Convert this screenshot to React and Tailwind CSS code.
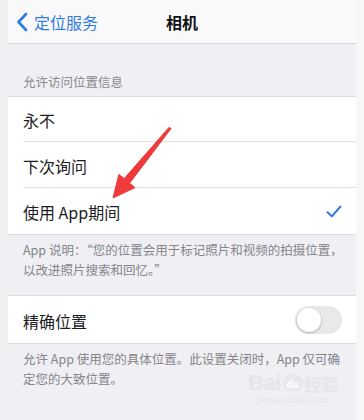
import React, { useState } from "react";

const font = { fontFamily: '"Noto Sans CJK SC", "Noto Sans", sans-serif' };

const Row = ({ children, last, right, h = "h-[46px]" }) => (
  <div className="pl-[15px]">
    <div
      className={`${h} flex items-center justify-between pr-[14px] ${
        last ? "" : "border-b border-[#e1e1e5]"
      }`}
    >
      <span className="text-[16px] text-[#1c1c1e] leading-none pt-[2px]">{children}</span>
      {right}
    </div>
  </div>
);

const Check = () => (
  <svg width="16" height="13" viewBox="0 0 16 13" fill="none">
    <path
      d="M1.5 7.2 L5.8 11.3 L14.5 1.5"
      stroke="#2f7be4"
      strokeWidth="2"
      strokeLinecap="round"
      strokeLinejoin="round"
    />
  </svg>
);

const Toggle = ({ on, onClick }) => (
  <button
    onClick={onClick}
    className={`relative w-[47px] h-[28px] rounded-full transition-colors ${
      on ? "bg-[#34c759]" : "bg-[#e9e9eb]"
    }`}
  >
    <span
      className={`absolute top-[2px] w-[24px] h-[24px] rounded-full bg-white shadow-[0_1px_3px_rgba(0,0,0,0.25)] transition-all ${
        on ? "left-[21px]" : "left-[2px]"
      }`}
    />
  </button>
);

export default function App() {
  const [precise, setPrecise] = useState(false);

  return (
    <div className="w-[364px] h-[420px] overflow-hidden flex bg-[#f3f3f5]" style={font}>
      <div className="w-[8px] bg-[#efeff1]" />
      <div className="relative w-[348px] bg-[#efeff4] flex flex-col">
        {/* Nav bar */}
        <div className="h-[44px] shrink-0 bg-[#f9f9f9] border-b border-[#d3d3d7] grid grid-cols-[1fr_auto_1fr] items-center">
          <div className="flex items-center gap-[6px] pl-[8px]">
            <svg width="12" height="20" viewBox="0 0 12 20" fill="none">
              <path
                d="M10 2 L2.5 10 L10 18"
                stroke="#2f7be4"
                strokeWidth="2.6"
                strokeLinecap="round"
                strokeLinejoin="round"
              />
            </svg>
            <span className="text-[16px] text-[#2f7be4] leading-none">定位服务</span>
          </div>
          <span className="text-[16px] font-semibold text-[#111] leading-none">相机</span>
          <div />
        </div>

        {/* Section header */}
        <div className="h-[52px] shrink-0 flex items-end pl-[15px] pb-[6px]">
          <span className="text-[12.5px] leading-[16px] text-[#8a8a8e]">允许访问位置信息</span>
        </div>

        <div className="bg-white border-y border-[#dcdce0]">
          <Row h="h-[45px]">永不</Row>
          <Row>下次询问</Row>
          <Row last right={<Check />}>
            使用 App期间
          </Row>
        </div>

        <div className="h-[60px] shrink-0 pl-[15px] pt-[5px] text-[12.5px] leading-[20px] text-[#85858a] whitespace-nowrap">
          App 说明：“您的位置会用于标记照片和视频的拍摄位置，
          <br />
          以改进照片搜索和回忆。”
        </div>

        <div className="bg-white border-y border-[#dcdce0]">
          <Row h="h-[47px]" last right={<Toggle on={precise} onClick={() => setPrecise(!precise)} />}>
            精确位置
          </Row>
        </div>

        <div className="pl-[15px] pt-[5px] text-[12.5px] leading-[20px] text-[#85858a] whitespace-nowrap">
          允许 App 使用您的具体位置。此设置关闭时，App 仅可确
          <br />
          定您的大致位置。
        </div>

        {/* Watermark */}
        <div className="absolute left-[240px] top-[372px] flex flex-col items-center text-[#e6e6ea] select-none">
          <div className="flex items-center gap-[2px]">
            <span className="text-[22px] font-bold leading-none tracking-tight" style={{ fontFamily: '"Liberation Sans", sans-serif' }}>
              Bai
            </span>
            <span className="w-[20px] h-[18px] rounded-full bg-[#e8e8ec] text-[10px] text-white flex items-center justify-center font-bold">
              du
            </span>
            <span className="text-[17px] font-bold leading-none">经验</span>
          </div>
          <span className="text-[9px] leading-[12px] text-[#e6e6ea]" style={{ fontFamily: '"Liberation Sans", sans-serif' }}>
            jingyan.baidu.com
          </span>
        </div>

        {/* Red annotation arrow */}
        <svg className="absolute left-[-8px] top-0 pointer-events-none" width="364" height="420" viewBox="0 0 364 420">
          <polygon
            points="171,128.6 129.6,183.2 135,187.6 113,198 118.8,174.4 124.2,178.6 169,127.4"
            fill="#ee3a3a"
            stroke="#ee3a3a"
            strokeWidth="1"
            strokeLinejoin="round"
          />
        </svg>
      </div>
      <div className="w-[8px] bg-[#f7f7f8]" />
    </div>
  );
}
